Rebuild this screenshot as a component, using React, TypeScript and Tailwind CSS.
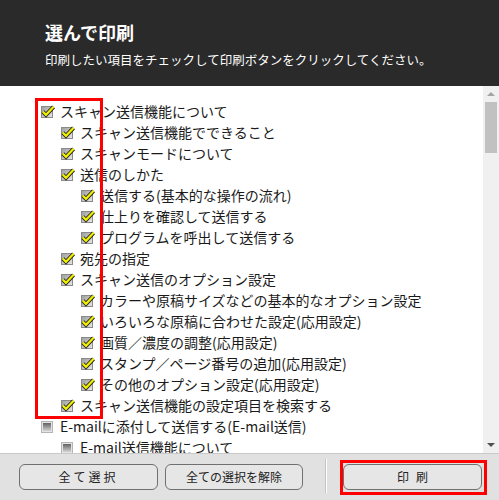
import React from "react";

type Item = { level: number; label: string; checked: boolean };

const items: Item[] = [
    { level: 0, label: "スキャン送信機能について", checked: true },
    { level: 1, label: "スキャン送信機能でできること", checked: true },
    { level: 1, label: "スキャンモードについて", checked: true },
    { level: 1, label: "送信のしかた", checked: true },
    { level: 2, label: "送信する(基本的な操作の流れ)", checked: true },
    { level: 2, label: "仕上りを確認して送信する", checked: true },
    { level: 2, label: "プログラムを呼出して送信する", checked: true },
    { level: 1, label: "宛先の指定", checked: true },
    { level: 1, label: "スキャン送信のオプション設定", checked: true },
    { level: 2, label: "カラーや原稿サイズなどの基本的なオプション設定", checked: true },
    { level: 2, label: "いろいろな原稿に合わせた設定(応用設定)", checked: true },
    { level: 2, label: "画質／濃度の調整(応用設定)", checked: true },
    { level: 2, label: "スタンプ／ページ番号の追加(応用設定)", checked: true },
    { level: 2, label: "その他のオプション設定(応用設定)", checked: true },
    { level: 1, label: "スキャン送信機能の設定項目を検索する", checked: true },
    { level: 0, label: "E-mailに添付して送信する(E-mail送信)", checked: false },
    { level: 1, label: "E-mail送信機能について", checked: false },
];

const indent = ["pl-[41px]", "pl-[61px]", "pl-[81px]"];

function CheckIcon({ checked }: { checked: boolean }) {
    return (
        <svg width="14" height="13" viewBox="0 0 14 13" className="shrink-0 mr-[5px]">
            <defs>
                <linearGradient id="boxOn" x1="0" y1="0" x2="1" y2="1">
                    <stop offset="0" stopColor="#9c9c9c" />
                    <stop offset="1" stopColor="#e8e8e8" />
                </linearGradient>
                <linearGradient id="boxOff" x1="0" y1="0" x2="0" y2="1">
                    <stop offset="0" stopColor="#616161" />
                    <stop offset="1" stopColor="#d4d4d4" />
                </linearGradient>
            </defs>
            {checked ? (
                <>
                    <rect x="0.5" y="1.5" width="11" height="11" fill="url(#boxOn)" stroke="#8a8a8a" />
                    <path d="M1.8 6.6 L5 9.8 L12.6 1.8" fill="none" stroke="#1e1e1e" strokeWidth="4" strokeLinejoin="miter" />
                    <path d="M1.8 6.6 L5 9.8 L12.6 1.8" fill="none" stroke="#f0f000" strokeWidth="2.2" strokeLinejoin="miter" />
                </>
            ) : (
                <>
                    <rect x="0.5" y="1.5" width="11" height="11" fill="#e4e4e4" stroke="#b4b4b4" />
                    <rect x="2" y="3" width="8" height="8" fill="url(#boxOff)" />
                </>
            )}
        </svg>
    );
}

export default function App() {
    return (
        <div
            className="w-[499px] h-[500px] flex flex-col overflow-hidden bg-white"
            style={{ fontFamily: '"Noto Sans CJK JP", "Noto Sans", sans-serif' }}
        >
            {/* header */}
            <div className="h-[86px] shrink-0 bg-[#2a2a2a] pl-[45px] pt-[20px] text-white">
                <div className="h-[24px] leading-[24px] text-[18px] font-bold">選んで印刷</div>
                <div className="mt-[6px] h-[20px] leading-[20px] text-[12.5px]">
                    印刷したい項目をチェックして印刷ボタンをクリックしてください。
                </div>
            </div>

            {/* tree list */}
            <div className="h-[367px] shrink-0 flex">
                <div className="relative flex-1 overflow-hidden pt-[15px]">
                    {items.map((it, i) => (
                        <div
                            key={i}
                            className={`h-[21px] flex items-center whitespace-nowrap text-[14px] text-[#1a1a1a] ${indent[it.level]}`}
                        >
                            <CheckIcon checked={it.checked} />
                            <span className="leading-[21px]">{it.label}</span>
                        </div>
                    ))}
                    <div className="absolute left-[35px] top-[12px] w-[68px] h-[321px] border-[3px] border-[#ff0000]" />
                </div>
                <div className="w-[16px] bg-[#f0f0f0] flex flex-col items-center">
                    <div className="h-[16px] flex items-center justify-center">
                        <div className="w-0 h-0 border-l-[4px] border-r-[4px] border-b-[4px] border-l-transparent border-r-transparent border-b-[#a3a3a3]" />
                    </div>
                    <div className="w-[12px] h-[51px] bg-[#c1c1c1]" />
                    <div className="flex-1" />
                    <div className="h-[16px] flex items-center justify-center">
                        <div className="w-0 h-0 border-l-[4px] border-r-[4px] border-t-[4px] border-l-transparent border-r-transparent border-t-[#505050]" />
                    </div>
                </div>
            </div>

            {/* footer */}
            <div className="flex-1 bg-[#e1e1e1] border-t border-[#c9c9c9] flex items-start pt-[10px] pl-[19px] text-[#222] text-[12px]">
                <button className="w-[139px] h-[26px] rounded-[6px] border border-[#707070] bg-[#e6e6e6] tracking-[3px]">
                    全て選択
                </button>
                <button className="ml-[7px] w-[138px] h-[26px] rounded-[6px] border border-[#707070] bg-[#e6e6e6]">
                    全ての選択を解除
                </button>
                <div className="ml-[22px] mt-[-5px] w-[1px] h-[34px] bg-[#c4c4c4] border-r border-white box-content" />
                <div className="relative ml-[16px]">
                    <button className="w-[139px] h-[26px] rounded-[6px] border border-[#707070] bg-[#e6e6e6] tracking-[7px] pl-[7px]">
                        印刷
                    </button>
                    <div className="absolute left-[-3px] right-[-5px] top-[-4px] bottom-[-5px] border-[3px] border-[#ff0000]" />
                </div>
            </div>
        </div>
    );
}
